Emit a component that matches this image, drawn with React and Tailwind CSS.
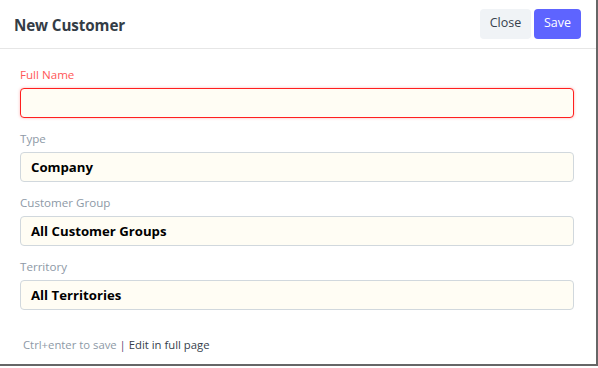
import React from "react";

const fields = [
  { label: "Type", value: "Company" },
  { label: "Customer Group", value: "All Customer Groups" },
  { label: "Territory", value: "All Territories" },
];

export default function App() {
  return (
    <div
      className="w-[598px] h-[368px] overflow-hidden bg-white"
      style={{ fontFamily: '"Open Sans", "Noto Sans", sans-serif' }}
    >
      <div className="w-[598px] h-[366px] bg-white border-r-2 border-b-2 border-[#666666] flex flex-col">
        {/* Header */}
        <div className="h-[49px] shrink-0 flex items-center justify-between pl-[14px] pr-[15px] border-b border-[#e6e6e6]">
          <h1 className="mt-[3px] text-[15.2px] font-bold text-[#333c46] tracking-[-0.1px]">New Customer</h1>
          <div className="flex gap-[3px] -mt-[1px]">
            <button className="w-[51px] h-[30px] rounded-[4px] bg-[#f0f3f6] text-[12.5px] text-[#36414c]">
              Close
            </button>
            <button className="w-[47px] h-[30px] rounded-[4px] bg-[#5e64ff] text-[12.5px] text-white">
              Save
            </button>
          </div>
        </div>

        {/* Body */}
        <div className="pl-5 pr-[22px] pt-[17px]">
          <div className="mb-3">
            <div className="h-[18px] leading-[18px] text-[11.6px] text-[#ff5858] mb-1">Full Name</div>
            <div className="h-[30px] rounded-[4px] bg-[#fffdf4] border border-[#ff1f1f] shadow-[0_0_3px_rgba(255,40,40,0.35)]" />
          </div>
          {fields.map((f) => (
            <div key={f.label} className="mb-3">
              <div className="h-[18px] leading-[18px] text-[11.6px] text-[#8d99a6] mb-1">{f.label}</div>
              <div className="h-[30px] rounded-[4px] bg-[#fffdf4] border border-[#d1d8dd] flex items-center pl-[10px] pt-[1px] text-[13.2px] font-bold text-black">
                {f.value}
              </div>
            </div>
          ))}
          <div className="mt-[26px] pl-[3px] h-[18px] leading-[18px] text-[11.3px]">
            <span className="text-[#8d99a6]">Ctrl+enter to save </span>
            <span className="text-[#5b4a75]">|</span>
            <span className="text-[#36414c]"> Edit in full page</span>
          </div>
        </div>
      </div>
    </div>
  );
}
